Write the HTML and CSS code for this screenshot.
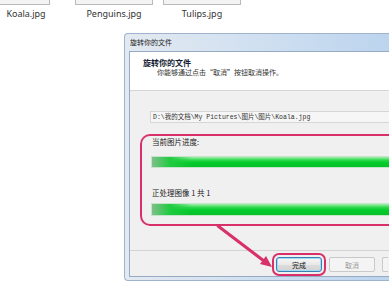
FILE: index.html
```html
<!DOCTYPE html>
<html lang="zh-CN">
<head>
    <meta charset="UTF-8">
    <title>旋转你的文件</title>
    <link rel="stylesheet" href="styles.css">
</head>
<body>
    <div class="thumbs">
        <div class="thumb first">
            <div class="thumb-btn"></div>
            <div class="thumb-name">Koala.jpg</div>
        </div>
        <div class="thumb">
            <div class="thumb-btn"></div>
            <div class="thumb-name">Penguins.jpg</div>
        </div>
        <div class="thumb">
            <div class="thumb-btn"></div>
            <div class="thumb-name">Tulips.jpg</div>
        </div>
    </div>

    <div class="window">
        <div class="window-title">旋转你的文件</div>
        <div class="window-body">
            <div class="wizard-head">
                <div class="wizard-title">旋转你的文件</div>
                <div class="wizard-sub">你能够通过点击“取消”按钮取消操作。</div>
            </div>

            <div class="wizard-main">
                <div class="path-box">D:\我的文档\My Pictures\图片\图片\Koala.jpg</div>

                <div class="progress-group">
                    <div class="progress-label">当前图片进度:</div>
                    <div class="progress-bar"></div>
                    <div class="progress-label second">正处理图像 1 共 1</div>
                    <div class="progress-bar last"></div>
                </div>
            </div>

            <div class="wizard-foot">
                <button class="win-btn primary">完成</button>
                <button class="win-btn" disabled>取消</button>
                <button class="win-btn cut" disabled></button>
            </div>
        </div>
    </div>

    <!-- annotation arrow drawn over the dialog -->
    <svg class="arrow" width="389" height="283" viewBox="0 0 389 283">
        <line x1="218" y1="226" x2="264" y2="261" stroke="#d9306a" stroke-width="3" stroke-linecap="round"/>
        <polygon points="272,267 260,264 266,256" fill="#d9306a"/>
    </svg>
</body>
</html>
```

FILE: styles.css
```css
* {
    box-sizing: border-box;
    margin: 0;
    padding: 0;
}

body {
    width: 389px;
    height: 283px;
    overflow: hidden;
    background-color: #ffffff;
    font-family: 'Noto Sans', 'Noto Sans CJK SC', sans-serif;
    color: #222222;
    position: relative;
}

/* file thumbnails at the top */
.thumbs {
    display: flex;
    gap: 10px;
}

.thumb {
    width: 78px;
}

.thumb.first {
    width: 65px;
    padding-right: 13px;
}

.thumb-btn {
    height: 5px;
    width: 78px;
    background-color: #f3f3f3;
    border: 1px solid #b9b9b9;
    border-top: none;
}

.thumb.first .thumb-btn {
    width: 50px;
    border-left: none;
}

.thumb-name {
    margin-top: 3px;
    font-size: 9px;
    line-height: 12px;
    text-align: center;
    color: #333333;
}

/* dialog window, cut off by the right edge */
.window {
    margin-top: 13px;
    margin-left: 124px;
    width: 265px;
    border: 1px solid #9fb4cc;
    border-right: none;
    border-radius: 4px 0 0 4px;
    background: linear-gradient(90deg, #e3e9f0 0%, #d2e1f1 45%, #bcd4ee 100%);
    padding: 0 0 3px 4px;
}

.window-title {
    height: 17px;
    line-height: 17px;
    font-size: 7px;
    padding-left: 1px;
    color: #1d1d1d;
    font-family: 'Noto Sans CJK SC', sans-serif;
}

.window-body {
    border: 1px solid #97aac4;
    border-right: none;
    background-color: #f0f0f0;
    overflow: hidden;
}

.wizard-head {
    height: 39px;
    background-color: #ffffff;
    border-bottom: 1px solid #d5d5d5;
    padding: 6px 0 0 13px;
    font-family: 'Noto Sans CJK SC', sans-serif;
}

.wizard-title {
    font-size: 8px;
    line-height: 10px;
    font-weight: bold;
    color: #141b33;
}

.wizard-sub {
    font-size: 7px;
    line-height: 9px;
    padding-left: 14px;
    color: #333333;
}

.wizard-main {
    padding: 20px 0 24px 10px;
}

.path-box {
    margin-left: 10px;
    height: 12px;
    line-height: 11px;
    background-color: #f6f6f6;
    border: 1px solid #d6d6d6;
    border-right: none;
    padding-left: 2px;
    font-family: 'Liberation Mono', 'Noto Sans CJK SC', monospace;
    font-size: 6.5px;
    color: #333333;
    white-space: nowrap;
}

.progress-group {
    margin-top: 11px;
    border: 2px solid #d9306a;
    border-right: none;
    border-radius: 10px 0 0 10px;
    padding: 1px 0 8px 9px;
}

.progress-label {
    font-family: 'Noto Sans CJK SC', sans-serif;
    font-size: 7.5px;
    line-height: 10px;
    padding-left: 1px;
    color: #222222;
}

.progress-label.second {
    margin-top: 20px;
}

.progress-bar {
    margin-top: 9px;
    height: 12px;
    border: 1px solid #c4e5c9;
    border-right: none;
    background: linear-gradient(90deg, #7fbf8a 0px, #1fcb40 18px, transparent 40px),
                linear-gradient(180deg, #a4efb0 0%, #2fd94c 30%, #03cc2c 55%, #06bf27 100%);
}

.progress-bar.last {
    margin-top: 5px;
    height: 13px;
}

.wizard-foot {
    height: 26px;
    border-top: 1px solid #d3d3d3;
    display: flex;
    gap: 7px;
    padding: 6px 0 0 146px;
}

.win-btn {
    flex: none;
    width: 46px;
    height: 15px;
    border: 1px solid #a9a9a9;
    border-radius: 2px;
    background: linear-gradient(180deg, #f6f6f6 0%, #e9e9e9 50%, #dcdcdc 51%, #d4d4d4 100%);
    font-family: 'Noto Sans CJK SC', sans-serif;
    font-size: 7px;
    color: #111111;
}

.win-btn:disabled {
    background: #f4f4f4;
    border-color: #c9c9c9;
    color: #9a9a9a;
}

.win-btn.cut {
    width: 6px;
    border-right: none;
    border-radius: 2px 0 0 2px;
}

.win-btn.primary {
    border-color: #3c7fb1;
    box-shadow: inset 0 0 0 1px #9fdcf4;
    outline: 2px solid #d9306a;
    outline-offset: 2px;
    border-radius: 3px;
}

/* annotation overlay */
.arrow {
    position: absolute;
    left: 0;
    top: 0;
    pointer-events: none;
}
```
